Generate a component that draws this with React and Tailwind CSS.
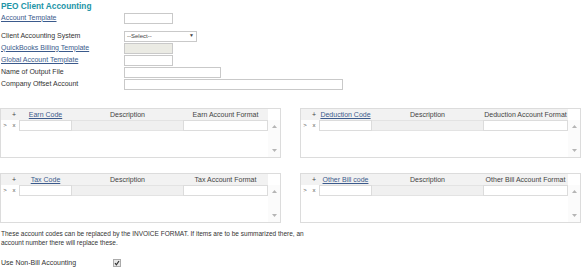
import React from "react";

function Up() {
  return (
    <svg width="5" height="3" viewBox="0 0 5 3"><path d="M0 3 L2.5 0 L5 3 Z" fill="#b5b5b5" /></svg>
  );
}
function Down() {
  return (
    <svg width="5" height="3" viewBox="0 0 5 3"><path d="M0 0 L2.5 3 L5 0 Z" fill="#b5b5b5" /></svg>
  );
}

function Grid({ code, format }) {
  return (
    <div className="w-[281px] h-[50px] border border-[#dcdcdc] flex flex-col">
      <div className="flex h-[11px] shrink-0">
        <div className="flex h-full bg-[#f2f2f2] text-[#444]">
          <div className="w-[8px]" />
          <div className="w-[10px] text-center leading-[11px]">+</div>
          <div className="w-[53px] text-center leading-[11px] whitespace-nowrap">
            <span className="underline text-[#3b5a8c]">{code}</span>
          </div>
          <div className="w-[111px] text-center leading-[11px]">Description</div>
          <div className="w-[85px] text-center leading-[11px] whitespace-nowrap overflow-hidden">{format}</div>
        </div>
        <div className="flex-1 bg-white" />
      </div>
      <div className="flex flex-1">
        <div className="flex flex-col">
          <div className="flex h-[11px] text-[#555]">
            <div className="w-[8px] text-center leading-[11px] text-[6px]">&gt;</div>
            <div className="w-[10px] text-center leading-[11px] text-[6px]">x</div>
            <div className="w-[53px] h-[11px] bg-white border border-[#dcdcdc]" />
            <div className="w-[111px] h-[11px] bg-[#f0f0f0] border-y border-[#e3e3e3]" />
            <div className="w-[85px] h-[11px] bg-white border border-[#dcdcdc]" />
          </div>
        </div>
        <div className="flex-1 flex flex-col items-center justify-between pt-[5px] pb-[5px] bg-[#fbfbfb]">
          <Up />
          <Down />
        </div>
      </div>
    </div>
  );
}

function Row({ label, link, children, className = "" }) {
  return (
    <div className={"flex items-center h-[12px] " + className}>
      <div className="w-[123px] whitespace-nowrap">
        {link ? (
          <span className="underline text-[#3b5a8c]">{label}</span>
        ) : (
          <span className="text-[#333]">{label}</span>
        )}
      </div>
      {children}
    </div>
  );
}

const inp = "h-[11px] border border-[#c9c9c9] bg-white";

export default function App() {
  return (
    <div
      className="w-[583px] h-[269px] overflow-hidden bg-white text-[7px] text-[#333] pl-[1px]"
      style={{ fontFamily: '"Liberation Sans", Arial, sans-serif' }}
    >
      <div className="h-[12px] leading-[12px] text-[8.3px] font-bold text-[#2194a6]">PEO Client Accounting</div>
      <Row label="Account Template" link>
        <div className={inp + " w-[49px]"} />
      </Row>
      <Row label="Client Accounting System" className="mt-[6px]">
        <div className={inp + " w-[73px] flex items-center justify-between px-[2px] text-[6px] text-[#444]"}>
          <span>--Select--</span>
          <span className="text-[5px]">▼</span>
        </div>
      </Row>
      <Row label="QuickBooks Billing Template" link>
        <div className="h-[11px] w-[49px] border border-[#c9c9c9] bg-[#ebebe4]" />
      </Row>
      <Row label="Global Account Template" link>
        <div className={inp + " w-[49px]"} />
      </Row>
      <Row label="Name of Output File">
        <div className={inp + " w-[97px]"} />
      </Row>
      <Row label="Company Offset Account">
        <div className={inp + " w-[219px]"} />
      </Row>

      <div className="flex gap-[19px] mt-[18px] -ml-[1px]">
        <Grid code="Earn Code" format="Earn Account Format" />
        <Grid code="Deduction Code" format="Deduction Account Format" />
      </div>
      <div className="flex gap-[19px] mt-[15px] -ml-[1px]">
        <Grid code="Tax Code" format="Tax Account Format" />
        <Grid code="Other Bill code" format="Other Bill Account Format" />
      </div>

      <div className="mt-[6px] leading-[9px] w-[310px] text-[6.5px] text-[#333]">
        These account codes can be replaced by the INVOICE FORMAT. If items are to be summarized there, an account number there will replace these.
      </div>

      <div className="flex items-center mt-[11px] h-[10px]">
        <div className="w-[112px]">Use Non-Bill Accounting</div>
        <div className="w-[8px] h-[8px] border border-[#aaa] bg-[#e8e8e8] flex items-center justify-center">
          <svg width="6" height="6" viewBox="0 0 6 6"><path d="M1 3.2 L2.4 4.8 L5 1" stroke="#333" strokeWidth="1.2" fill="none" /></svg>
        </div>
      </div>
    </div>
  );
}
